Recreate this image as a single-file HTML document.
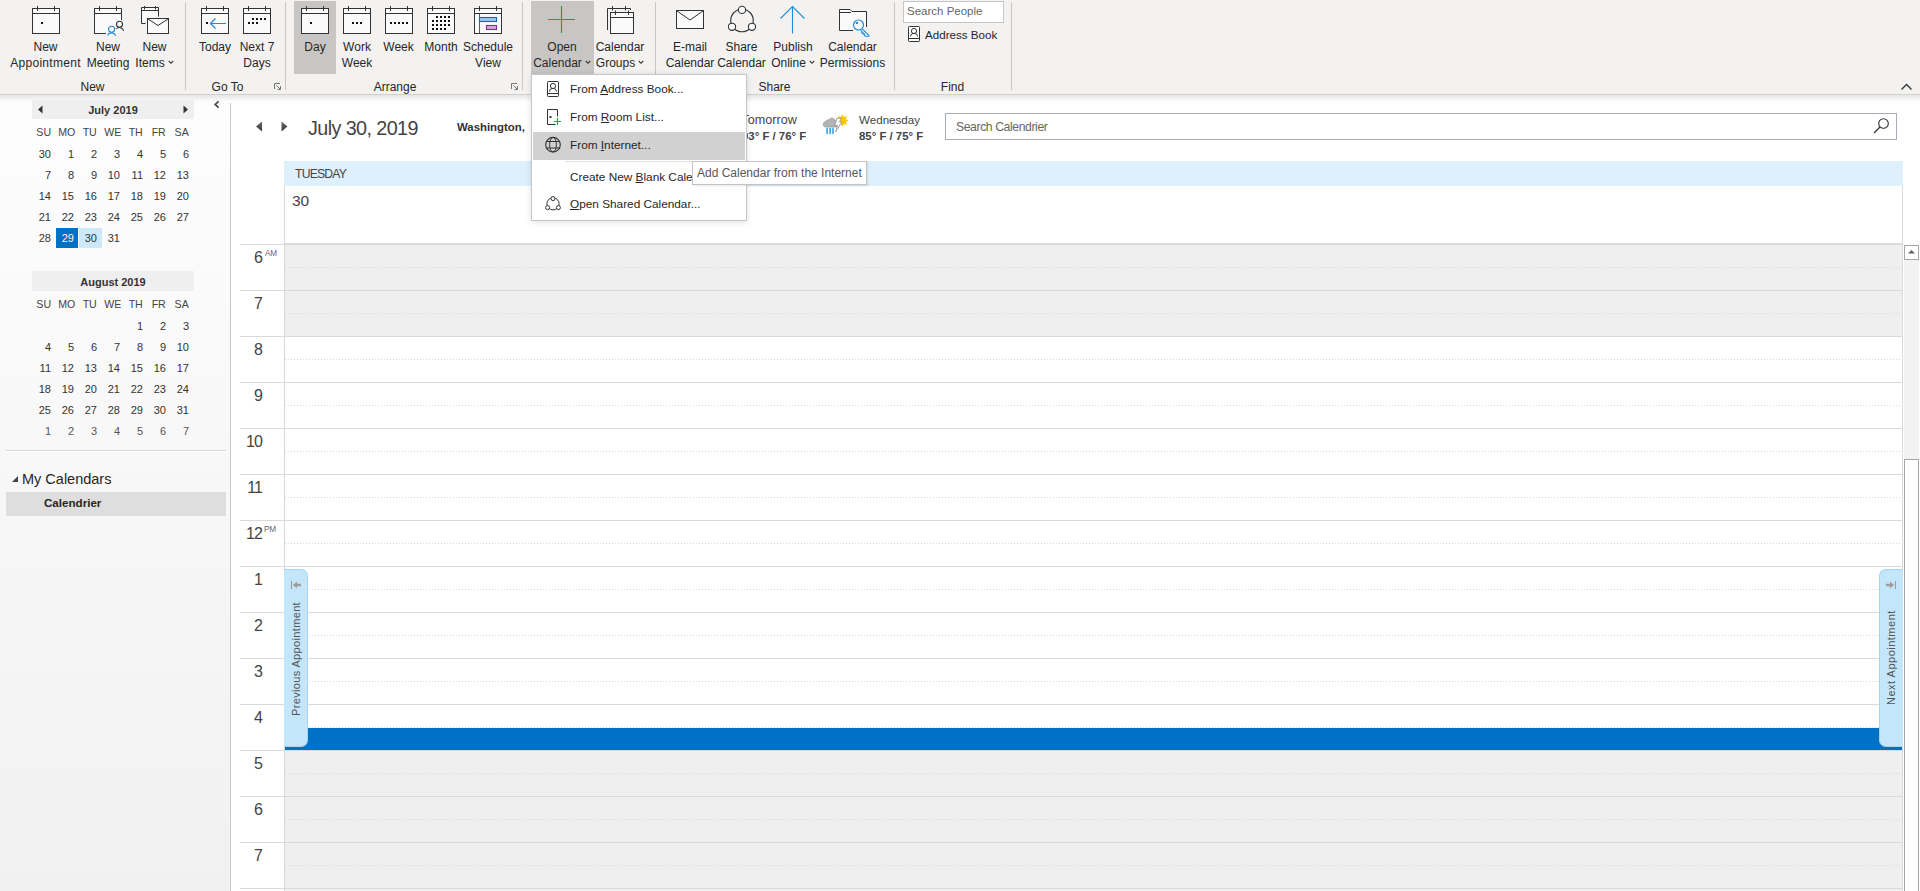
<!DOCTYPE html><html><head><meta charset="utf-8"><style>
*{box-sizing:border-box}
html,body{margin:0;padding:0;width:1920px;height:891px;overflow:hidden;background:#fff;font-family:"Liberation Sans", sans-serif;color:#262626}
.a{position:absolute}
.t{position:absolute;white-space:nowrap;line-height:1}
.rb{font-size:12px;color:#262626}
.sep{position:absolute;width:1px;background:#c8c6c4}
</style></head><body>

<div class="a" style="left:0;top:0;width:1920px;height:94px;background:#f3f2f1"></div>
<div class="a" style="left:0;top:94px;width:1920px;height:1px;background:#d2d0ce"></div>
<div class="a" style="left:0;top:95px;width:1920px;height:7px;background:linear-gradient(#e6e6e6,rgba(255,255,255,0))"></div>
<div class="a" style="left:294px;top:1px;width:42px;height:73px;background:#c8c6c4"></div>
<div class="a" style="left:531px;top:1px;width:63px;height:73px;background:#c8c6c4"></div>
<div class="sep" style="left:185px;top:2px;height:88px"></div>
<div class="sep" style="left:285px;top:2px;height:88px"></div>
<div class="sep" style="left:522px;top:2px;height:88px"></div>
<div class="sep" style="left:655px;top:2px;height:88px"></div>
<div class="sep" style="left:894px;top:2px;height:88px"></div>
<div class="sep" style="left:1011px;top:2px;height:88px"></div>
<div class="t" style="left:-54.5px;width:200px;text-align:center;top:41px;font-size:12px;color:#262626;font-weight:400;">New</div>
<div class="t" style="left:-54.5px;width:200px;text-align:center;top:57px;font-size:12px;color:#262626;font-weight:400;"><span style="letter-spacing:0.3px">Appointment</span></div>
<div class="t" style="left:8px;width:200px;text-align:center;top:41px;font-size:12px;color:#262626;font-weight:400;">New</div>
<div class="t" style="left:8px;width:200px;text-align:center;top:57px;font-size:12px;color:#262626;font-weight:400;">Meeting</div>
<div class="t" style="left:54.5px;width:200px;text-align:center;top:41px;font-size:12px;color:#262626;font-weight:400;">New</div>
<div class="t" style="left:54.5px;width:200px;text-align:center;top:57px;font-size:12px;color:#262626;font-weight:400;">Items<svg width="6" height="5" style="margin-left:3px;vertical-align:2px" viewBox="0 0 6 5"><path d="M0.8 1 L3 3.3 L5.2 1" fill="none" stroke="#333" stroke-width="1.1"/></svg></div>
<div class="t" style="left:115px;width:200px;text-align:center;top:41px;font-size:12px;color:#262626;font-weight:400;">Today</div>
<div class="t" style="left:157px;width:200px;text-align:center;top:41px;font-size:12px;color:#262626;font-weight:400;">Next 7</div>
<div class="t" style="left:157px;width:200px;text-align:center;top:57px;font-size:12px;color:#262626;font-weight:400;">Days</div>
<div class="t" style="left:215px;width:200px;text-align:center;top:41px;font-size:12px;color:#262626;font-weight:400;">Day</div>
<div class="t" style="left:257px;width:200px;text-align:center;top:41px;font-size:12px;color:#262626;font-weight:400;">Work</div>
<div class="t" style="left:257px;width:200px;text-align:center;top:57px;font-size:12px;color:#262626;font-weight:400;">Week</div>
<div class="t" style="left:298.5px;width:200px;text-align:center;top:41px;font-size:12px;color:#262626;font-weight:400;">Week</div>
<div class="t" style="left:341px;width:200px;text-align:center;top:41px;font-size:12px;color:#262626;font-weight:400;">Month</div>
<div class="t" style="left:388px;width:200px;text-align:center;top:41px;font-size:12px;color:#262626;font-weight:400;">Schedule</div>
<div class="t" style="left:388px;width:200px;text-align:center;top:57px;font-size:12px;color:#262626;font-weight:400;">View</div>
<div class="t" style="left:462px;width:200px;text-align:center;top:41px;font-size:12px;color:#262626;font-weight:400;">Open</div>
<div class="t" style="left:462px;width:200px;text-align:center;top:57px;font-size:12px;color:#262626;font-weight:400;">Calendar<svg width="6" height="5" style="margin-left:3px;vertical-align:2px" viewBox="0 0 6 5"><path d="M0.8 1 L3 3.3 L5.2 1" fill="none" stroke="#333" stroke-width="1.1"/></svg></div>
<div class="t" style="left:520px;width:200px;text-align:center;top:41px;font-size:12px;color:#262626;font-weight:400;">Calendar</div>
<div class="t" style="left:520px;width:200px;text-align:center;top:57px;font-size:12px;color:#262626;font-weight:400;">Groups<svg width="6" height="5" style="margin-left:3px;vertical-align:2px" viewBox="0 0 6 5"><path d="M0.8 1 L3 3.3 L5.2 1" fill="none" stroke="#333" stroke-width="1.1"/></svg></div>
<div class="t" style="left:590px;width:200px;text-align:center;top:41px;font-size:12px;color:#262626;font-weight:400;">E-mail</div>
<div class="t" style="left:590px;width:200px;text-align:center;top:57px;font-size:12px;color:#262626;font-weight:400;">Calendar</div>
<div class="t" style="left:641.5px;width:200px;text-align:center;top:41px;font-size:12px;color:#262626;font-weight:400;">Share</div>
<div class="t" style="left:641.5px;width:200px;text-align:center;top:57px;font-size:12px;color:#262626;font-weight:400;">Calendar</div>
<div class="t" style="left:693px;width:200px;text-align:center;top:41px;font-size:12px;color:#262626;font-weight:400;">Publish</div>
<div class="t" style="left:693px;width:200px;text-align:center;top:57px;font-size:12px;color:#262626;font-weight:400;">Online<svg width="6" height="5" style="margin-left:3px;vertical-align:2px" viewBox="0 0 6 5"><path d="M0.8 1 L3 3.3 L5.2 1" fill="none" stroke="#333" stroke-width="1.1"/></svg></div>
<div class="t" style="left:752.5px;width:200px;text-align:center;top:41px;font-size:12px;color:#262626;font-weight:400;">Calendar</div>
<div class="t" style="left:752.5px;width:200px;text-align:center;top:57px;font-size:12px;color:#262626;font-weight:400;">Permissions</div>
<div class="t" style="left:-7.5px;width:200px;text-align:center;top:81px;font-size:12px;color:#262626;font-weight:400;">New</div>
<div class="t" style="left:127.5px;width:200px;text-align:center;top:81px;font-size:12px;color:#262626;font-weight:400;">Go To</div>
<div class="t" style="left:295px;width:200px;text-align:center;top:81px;font-size:12px;color:#262626;font-weight:400;">Arrange</div>
<div class="t" style="left:674.5px;width:200px;text-align:center;top:81px;font-size:12px;color:#262626;font-weight:400;">Share</div>
<div class="t" style="left:852.5px;width:200px;text-align:center;top:81px;font-size:12px;color:#262626;font-weight:400;">Find</div>
<div class="a" style="left:903px;top:1px;width:101px;height:22px;background:#fff;border:1px solid #c6c6c6"></div>
<div class="t" style="left:907px;top:6px;font-size:11.5px;color:#666;font-weight:400;">Search People</div>
<div class="t" style="left:925px;top:29px;font-size:11.6px;color:#262626;font-weight:400;">Address Book</div>
<svg class="a" style="left:1900px;top:83px" width="13" height="8" viewBox="0 0 13 8"><path d="M1.5 6.5 L6.5 1.5 L11.5 6.5" fill="none" stroke="#333" stroke-width="1.3"/></svg>
<svg class="a" style="left:0;top:0" width="1920" height="100" viewBox="0 0 1920 100"><rect x="32.5" y="8.5" width="27" height="25" fill="#fafafa" stroke="#333333"/><path d="M32 13.5H60M37.5 6V11M54.5 6V11" stroke="#333333" fill="none"/><rect x="41" y="22" width="2" height="2" fill="#111"/><path d="M94.5 31V8.5H121.5V20M94.5 8.5V33.5H106" fill="#fafafa" stroke="#333333"/><rect x="95" y="14" width="26" height="19" fill="#fafafa"/><path d="M94 13.5H122M99.5 6V11M116.5 6V11M94.5 8.5V33.5H106" stroke="#333333" fill="none"/><path d="M121.5 9V20" stroke="#333333"/><circle cx="111.6" cy="29.3" r="3" fill="none" stroke="#1e8bd6" stroke-width="1.1"/><path d="M107.6 35.6A4.3 4.3 0 0 1 115.6 35.6" fill="none" stroke="#1e8bd6" stroke-width="1.1"/><circle cx="119.5" cy="24.3" r="3" fill="none" stroke="#333333" stroke-width="1.1"/><path d="M116.3 28.9A4.3 4.3 0 0 1 123.6 31" fill="none" stroke="#333333" stroke-width="1.1"/><path d="M141.5 23.5V7.5H158.5V16.5M141.5 23.5H145.5" fill="#fafafa" stroke="#333333"/><path d="M141 10.5H159M144.5 6V9.5M155.5 6V9.5" stroke="#333333"/><rect x="147.5" y="18.5" width="21" height="15" fill="#fafafa" stroke="#333333"/><path d="M148 19L158 25.5L168 19" fill="none" stroke="#333333"/><rect x="201.5" y="8.5" width="27" height="25" fill="#fafafa" stroke="#333333"/><path d="M201 13.5H229M206.5 6V11M223.5 6V11" stroke="#333333" fill="none"/><rect x="206" y="22" width="2" height="2" fill="#111"/><path d="M210.5 23.5H226M215.5 18.5L210.5 23.5L215.5 28.5" fill="none" stroke="#1e8bd6" stroke-width="1.2"/><rect x="243.5" y="8.5" width="27" height="25" fill="#fafafa" stroke="#333333"/><path d="M243 13.5H271M248.5 6V11M265.5 6V11" stroke="#333333" fill="none"/><rect x="252" y="18" width="2" height="2" fill="#111"/><rect x="256" y="18" width="2" height="2" fill="#111"/><rect x="260" y="18" width="2" height="2" fill="#111"/><rect x="264" y="18" width="2" height="2" fill="#111"/><rect x="248" y="22" width="2" height="2" fill="#111"/><rect x="252" y="22" width="2" height="2" fill="#111"/><rect x="256" y="22" width="2" height="2" fill="#111"/><rect x="301.5" y="8.5" width="27" height="25" fill="#fafafa" stroke="#333333"/><path d="M301 13.5H329M306.5 6V11M323.5 6V11" stroke="#333333" fill="none"/><rect x="310" y="22" width="2" height="2" fill="#111"/><rect x="343.5" y="8.5" width="27" height="25" fill="#fafafa" stroke="#333333"/><path d="M343 13.5H371M348.5 6V11M365.5 6V11" stroke="#333333" fill="none"/><rect x="352" y="22" width="2" height="2" fill="#111"/><rect x="356" y="22" width="2" height="2" fill="#111"/><rect x="360" y="22" width="2" height="2" fill="#111"/><rect x="385.5" y="8.5" width="27" height="25" fill="#fafafa" stroke="#333333"/><path d="M385 13.5H413M390.5 6V11M407.5 6V11" stroke="#333333" fill="none"/><rect x="390" y="22" width="2" height="2" fill="#111"/><rect x="394" y="22" width="2" height="2" fill="#111"/><rect x="398" y="22" width="2" height="2" fill="#111"/><rect x="402" y="22" width="2" height="2" fill="#111"/><rect x="406" y="22" width="2" height="2" fill="#111"/><rect x="427.5" y="8.5" width="27" height="25" fill="#fafafa" stroke="#333333"/><path d="M427 13.5H455M432.5 6V11M449.5 6V11" stroke="#333333" fill="none"/><rect x="436" y="16" width="2" height="2" fill="#111"/><rect x="440" y="16" width="2" height="2" fill="#111"/><rect x="444" y="16" width="2" height="2" fill="#111"/><rect x="448" y="16" width="2" height="2" fill="#111"/><rect x="432" y="20" width="2" height="2" fill="#111"/><rect x="436" y="20" width="2" height="2" fill="#111"/><rect x="440" y="20" width="2" height="2" fill="#111"/><rect x="444" y="20" width="2" height="2" fill="#111"/><rect x="448" y="20" width="2" height="2" fill="#111"/><rect x="432" y="24" width="2" height="2" fill="#111"/><rect x="436" y="24" width="2" height="2" fill="#111"/><rect x="440" y="24" width="2" height="2" fill="#111"/><rect x="444" y="24" width="2" height="2" fill="#111"/><rect x="448" y="24" width="2" height="2" fill="#111"/><rect x="432" y="28" width="2" height="2" fill="#111"/><rect x="436" y="28" width="2" height="2" fill="#111"/><rect x="440" y="28" width="2" height="2" fill="#111"/><rect x="444" y="28" width="2" height="2" fill="#111"/><rect x="474.5" y="8.5" width="27" height="25" fill="#fafafa" stroke="#333333"/><path d="M474 13.5H502M479.5 6V11M496.5 6V11" stroke="#333333" fill="none"/><path d="M479.5 14V33" stroke="#333333" stroke-width="0.8"/><rect x="479.5" y="17.5" width="17" height="4" fill="#90c8f6" stroke="#0f6cbd" stroke-width="1.1"/><rect x="486.5" y="25.5" width="10" height="4" fill="#dca0e6" stroke="#8b2aa0" stroke-width="1.1"/><path d="M561.5 6V33M548 19.5H575" stroke="#13a544" stroke-width="1.1"/><path d="M607.5 30V8.5H630.5V10" fill="none" stroke="#333333"/><path d="M612.5 6V10.5M625.5 6V10.5" stroke="#333333"/><rect x="610.5" y="12.5" width="23" height="21" fill="#fafafa" stroke="#333333"/><path d="M610 17.5H634M615.5 10.5V15M628.5 10.5V15" stroke="#333333"/><rect x="676.5" y="10.5" width="27" height="18" fill="#fafafa" stroke="#333333"/><path d="M677 11L690 20L703 11" fill="none" stroke="#333333"/><circle cx="742" cy="20.5" r="11.3" fill="none" stroke="#333333" stroke-width="1.1"/><circle cx="742" cy="9.9" r="3.6" fill="#f8f8f8" stroke="#333333" stroke-width="1.1"/><circle cx="732" cy="26.8" r="3.6" fill="#f8f8f8" stroke="#333333" stroke-width="1.1"/><circle cx="752" cy="26.8" r="3.6" fill="#f8f8f8" stroke="#333333" stroke-width="1.1"/><path d="M792.5 7V33.5M780.5 18.5L792.5 6.5L804.5 18.5" fill="none" stroke="#1e8bd6" stroke-width="1.1"/><path d="M853 30.5H839.5V9.5H850L852 11.5H866.5V27" fill="#fafafa" stroke="#333333"/><path d="M839.5 12.5H851" stroke="#333333"/><circle cx="858.5" cy="25" r="5" fill="#fafafa" stroke="#1e8bd6" stroke-width="1.2"/><rect x="856" y="22" width="2" height="2" fill="#1e8bd6"/><path d="M862.3 28.8L868.8 35.3V36.2H865.3L864 34.9L864.7 34.2L863.5 33L862.8 33.7L861.6 32.5L862.3 31.8L860.9 30.4" fill="#fafafa" stroke="#1e8bd6" stroke-width="1.1" stroke-linejoin="miter"/><rect x="908.5" y="26.5" width="11" height="15" rx="0.8" fill="#fff" stroke="#333333"/><path d="M908 38.5H920" stroke="#333333"/><circle cx="914" cy="31" r="2.6" fill="none" stroke="#333333"/><path d="M910.5 36.5A3.5 3.2 0 0 1 917.5 36.5" fill="none" stroke="#333333"/><path d="M274.5 89V83.5H280M276.5 85.5L280 89M277.5 89.5H280.5V86" fill="none" stroke="#666" stroke-width="0.9"/><path d="M511.5 89V83.5H517M513.5 85.5L517 89M514.5 89.5H517.5V86" fill="none" stroke="#666" stroke-width="0.9"/></svg>
<div class="a" style="left:0;top:102px;width:230px;height:789px;background:linear-gradient(#fdfdfd,#f1f1f1)"></div>
<div class="a" style="left:0;top:95px;width:230px;height:7px;background:linear-gradient(#e6e6e6,#fdfdfd)"></div>
<div class="a" style="left:230px;top:103px;width:1px;height:788px;background:#c8c8c8"></div>
<div class="a" style="left:32px;top:100px;width:162px;height:19px;background:#efefef"></div>
<div class="a" style="left:32px;top:271px;width:162px;height:20px;background:#efefef"></div>
<svg class="a" style="left:0;top:95px" width="230" height="30" viewBox="0 95 230 30"><path d="M38 109.5L42.5 105.5V113.5Z" fill="#333"/><path d="M188 109.5L183.5 105.5V113.5Z" fill="#333"/><path d="M218.6 101.3L215.2 104.5L218.6 107.7" fill="none" stroke="#444" stroke-width="1.7"/></svg>
<div class="t" style="left:13px;width:200px;text-align:center;top:105px;font-size:11px;color:#333;font-weight:700;">July 2019</div>
<div class="t" style="left:13px;width:200px;text-align:center;top:277px;font-size:11px;color:#333;font-weight:700;">August 2019</div>
<div class="a" style="left:56px;top:228px;width:22px;height:20px;background:#0072c6"></div>
<div class="a" style="left:79px;top:228px;width:23px;height:20px;background:#cce8f9"></div>
<div class="t" style="left:-56.3px;width:200px;text-align:center;top:127px;font-size:10.6px;color:#444;font-weight:400;">SU</div>
<div class="t" style="left:-33.3px;width:200px;text-align:center;top:127px;font-size:10.6px;color:#444;font-weight:400;">MO</div>
<div class="t" style="left:-10.299999999999997px;width:200px;text-align:center;top:127px;font-size:10.6px;color:#444;font-weight:400;">TU</div>
<div class="t" style="left:12.700000000000003px;width:200px;text-align:center;top:127px;font-size:10.6px;color:#444;font-weight:400;">WE</div>
<div class="t" style="left:35.69999999999999px;width:200px;text-align:center;top:127px;font-size:10.6px;color:#444;font-weight:400;">TH</div>
<div class="t" style="left:58.69999999999999px;width:200px;text-align:center;top:127px;font-size:10.6px;color:#444;font-weight:400;">FR</div>
<div class="t" style="left:81.69999999999999px;width:200px;text-align:center;top:127px;font-size:10.6px;color:#444;font-weight:400;">SA</div>
<div class="t" style="left:20px;width:31px;text-align:right;top:149px;font-size:11px;color:#333">30</div>
<div class="t" style="left:43px;width:31px;text-align:right;top:149px;font-size:11px;color:#333">1</div>
<div class="t" style="left:66px;width:31px;text-align:right;top:149px;font-size:11px;color:#333">2</div>
<div class="t" style="left:89px;width:31px;text-align:right;top:149px;font-size:11px;color:#333">3</div>
<div class="t" style="left:112px;width:31px;text-align:right;top:149px;font-size:11px;color:#333">4</div>
<div class="t" style="left:135px;width:31px;text-align:right;top:149px;font-size:11px;color:#333">5</div>
<div class="t" style="left:158px;width:31px;text-align:right;top:149px;font-size:11px;color:#333">6</div>
<div class="t" style="left:20px;width:31px;text-align:right;top:170px;font-size:11px;color:#333">7</div>
<div class="t" style="left:43px;width:31px;text-align:right;top:170px;font-size:11px;color:#333">8</div>
<div class="t" style="left:66px;width:31px;text-align:right;top:170px;font-size:11px;color:#333">9</div>
<div class="t" style="left:89px;width:31px;text-align:right;top:170px;font-size:11px;color:#333">10</div>
<div class="t" style="left:112px;width:31px;text-align:right;top:170px;font-size:11px;color:#333">11</div>
<div class="t" style="left:135px;width:31px;text-align:right;top:170px;font-size:11px;color:#333">12</div>
<div class="t" style="left:158px;width:31px;text-align:right;top:170px;font-size:11px;color:#333">13</div>
<div class="t" style="left:20px;width:31px;text-align:right;top:191px;font-size:11px;color:#333">14</div>
<div class="t" style="left:43px;width:31px;text-align:right;top:191px;font-size:11px;color:#333">15</div>
<div class="t" style="left:66px;width:31px;text-align:right;top:191px;font-size:11px;color:#333">16</div>
<div class="t" style="left:89px;width:31px;text-align:right;top:191px;font-size:11px;color:#333">17</div>
<div class="t" style="left:112px;width:31px;text-align:right;top:191px;font-size:11px;color:#333">18</div>
<div class="t" style="left:135px;width:31px;text-align:right;top:191px;font-size:11px;color:#333">19</div>
<div class="t" style="left:158px;width:31px;text-align:right;top:191px;font-size:11px;color:#333">20</div>
<div class="t" style="left:20px;width:31px;text-align:right;top:212px;font-size:11px;color:#333">21</div>
<div class="t" style="left:43px;width:31px;text-align:right;top:212px;font-size:11px;color:#333">22</div>
<div class="t" style="left:66px;width:31px;text-align:right;top:212px;font-size:11px;color:#333">23</div>
<div class="t" style="left:89px;width:31px;text-align:right;top:212px;font-size:11px;color:#333">24</div>
<div class="t" style="left:112px;width:31px;text-align:right;top:212px;font-size:11px;color:#333">25</div>
<div class="t" style="left:135px;width:31px;text-align:right;top:212px;font-size:11px;color:#333">26</div>
<div class="t" style="left:158px;width:31px;text-align:right;top:212px;font-size:11px;color:#333">27</div>
<div class="t" style="left:20px;width:31px;text-align:right;top:233px;font-size:11px;color:#333">28</div>
<div class="t" style="left:43px;width:31px;text-align:right;top:233px;font-size:11px;color:#333">29</div>
<div class="t" style="left:66px;width:31px;text-align:right;top:233px;font-size:11px;color:#333">30</div>
<div class="t" style="left:89px;width:31px;text-align:right;top:233px;font-size:11px;color:#333">31</div>
<div class="t" style="left:43px;width:31px;text-align:right;top:233px;font-size:11px;color:#fff">29</div>
<div class="t" style="left:-56.3px;width:200px;text-align:center;top:299px;font-size:10.6px;color:#444;font-weight:400;">SU</div>
<div class="t" style="left:-33.3px;width:200px;text-align:center;top:299px;font-size:10.6px;color:#444;font-weight:400;">MO</div>
<div class="t" style="left:-10.299999999999997px;width:200px;text-align:center;top:299px;font-size:10.6px;color:#444;font-weight:400;">TU</div>
<div class="t" style="left:12.700000000000003px;width:200px;text-align:center;top:299px;font-size:10.6px;color:#444;font-weight:400;">WE</div>
<div class="t" style="left:35.69999999999999px;width:200px;text-align:center;top:299px;font-size:10.6px;color:#444;font-weight:400;">TH</div>
<div class="t" style="left:58.69999999999999px;width:200px;text-align:center;top:299px;font-size:10.6px;color:#444;font-weight:400;">FR</div>
<div class="t" style="left:81.69999999999999px;width:200px;text-align:center;top:299px;font-size:10.6px;color:#444;font-weight:400;">SA</div>
<div class="t" style="left:112px;width:31px;text-align:right;top:321px;font-size:11px;color:#333">1</div>
<div class="t" style="left:135px;width:31px;text-align:right;top:321px;font-size:11px;color:#333">2</div>
<div class="t" style="left:158px;width:31px;text-align:right;top:321px;font-size:11px;color:#333">3</div>
<div class="t" style="left:20px;width:31px;text-align:right;top:342px;font-size:11px;color:#333">4</div>
<div class="t" style="left:43px;width:31px;text-align:right;top:342px;font-size:11px;color:#333">5</div>
<div class="t" style="left:66px;width:31px;text-align:right;top:342px;font-size:11px;color:#333">6</div>
<div class="t" style="left:89px;width:31px;text-align:right;top:342px;font-size:11px;color:#333">7</div>
<div class="t" style="left:112px;width:31px;text-align:right;top:342px;font-size:11px;color:#333">8</div>
<div class="t" style="left:135px;width:31px;text-align:right;top:342px;font-size:11px;color:#333">9</div>
<div class="t" style="left:158px;width:31px;text-align:right;top:342px;font-size:11px;color:#333">10</div>
<div class="t" style="left:20px;width:31px;text-align:right;top:363px;font-size:11px;color:#333">11</div>
<div class="t" style="left:43px;width:31px;text-align:right;top:363px;font-size:11px;color:#333">12</div>
<div class="t" style="left:66px;width:31px;text-align:right;top:363px;font-size:11px;color:#333">13</div>
<div class="t" style="left:89px;width:31px;text-align:right;top:363px;font-size:11px;color:#333">14</div>
<div class="t" style="left:112px;width:31px;text-align:right;top:363px;font-size:11px;color:#333">15</div>
<div class="t" style="left:135px;width:31px;text-align:right;top:363px;font-size:11px;color:#333">16</div>
<div class="t" style="left:158px;width:31px;text-align:right;top:363px;font-size:11px;color:#333">17</div>
<div class="t" style="left:20px;width:31px;text-align:right;top:384px;font-size:11px;color:#333">18</div>
<div class="t" style="left:43px;width:31px;text-align:right;top:384px;font-size:11px;color:#333">19</div>
<div class="t" style="left:66px;width:31px;text-align:right;top:384px;font-size:11px;color:#333">20</div>
<div class="t" style="left:89px;width:31px;text-align:right;top:384px;font-size:11px;color:#333">21</div>
<div class="t" style="left:112px;width:31px;text-align:right;top:384px;font-size:11px;color:#333">22</div>
<div class="t" style="left:135px;width:31px;text-align:right;top:384px;font-size:11px;color:#333">23</div>
<div class="t" style="left:158px;width:31px;text-align:right;top:384px;font-size:11px;color:#333">24</div>
<div class="t" style="left:20px;width:31px;text-align:right;top:405px;font-size:11px;color:#333">25</div>
<div class="t" style="left:43px;width:31px;text-align:right;top:405px;font-size:11px;color:#333">26</div>
<div class="t" style="left:66px;width:31px;text-align:right;top:405px;font-size:11px;color:#333">27</div>
<div class="t" style="left:89px;width:31px;text-align:right;top:405px;font-size:11px;color:#333">28</div>
<div class="t" style="left:112px;width:31px;text-align:right;top:405px;font-size:11px;color:#333">29</div>
<div class="t" style="left:135px;width:31px;text-align:right;top:405px;font-size:11px;color:#333">30</div>
<div class="t" style="left:158px;width:31px;text-align:right;top:405px;font-size:11px;color:#333">31</div>
<div class="t" style="left:20px;width:31px;text-align:right;top:426px;font-size:11px;color:#555">1</div>
<div class="t" style="left:43px;width:31px;text-align:right;top:426px;font-size:11px;color:#555">2</div>
<div class="t" style="left:66px;width:31px;text-align:right;top:426px;font-size:11px;color:#555">3</div>
<div class="t" style="left:89px;width:31px;text-align:right;top:426px;font-size:11px;color:#555">4</div>
<div class="t" style="left:112px;width:31px;text-align:right;top:426px;font-size:11px;color:#555">5</div>
<div class="t" style="left:135px;width:31px;text-align:right;top:426px;font-size:11px;color:#555">6</div>
<div class="t" style="left:158px;width:31px;text-align:right;top:426px;font-size:11px;color:#555">7</div>
<div class="a" style="left:6px;top:450px;width:220px;height:1px;background:#d8d8d8"></div>
<div class="a" style="left:6px;top:451px;width:220px;height:1px;background:#fff"></div>
<svg class="a" style="left:11px;top:475px" width="8" height="8" viewBox="0 0 8 8"><path d="M1 7H7V1Z" fill="#444"/></svg>
<div class="t" style="left:22px;top:472px;font-size:14.5px;color:#262626;font-weight:400;">My Calendars</div>
<div class="a" style="left:6px;top:492px;width:220px;height:24px;background:#dedede"></div>
<div class="t" style="left:44px;top:497px;font-size:11.6px;color:#262626;font-weight:700;">Calendrier</div>
<div class="a" style="left:231px;top:102px;width:1689px;height:789px;background:#fff"></div>
<div class="a" style="left:231px;top:95px;width:1689px;height:7px;background:linear-gradient(#e6e6e6,#fff)"></div>
<svg class="a" style="left:250px;top:118px" width="44" height="16" viewBox="250 118 44 16"><defs><linearGradient id="ga" x1="0" y1="0" x2="0" y2="1"><stop offset="0" stop-color="#6a6a6a"/><stop offset="1" stop-color="#3a3a3a"/></linearGradient></defs><path d="M256 126.5L262 121.5V131.5Z" fill="url(#ga)"/><path d="M287.5 126.5L281.5 121.5V131.5Z" fill="url(#ga)"/></svg>
<div class="t" style="left:308px;top:119px;font-size:19.8px;color:#444;font-weight:400;letter-spacing:-0.6px">July 30, 2019</div>
<div class="t" style="left:457px;top:122px;font-size:11.4px;color:#333;font-weight:700;">Washington,</div>
<div class="t" style="left:741.5px;top:114px;font-size:12.6px;color:#444;font-weight:400;">Tomorrow</div>
<div class="t" style="left:742px;top:131px;font-size:11.4px;color:#444;font-weight:700;">93° F / 76° F</div>
<div class="t" style="left:859px;top:114px;font-size:11.6px;color:#444;font-weight:400;">Wednesday</div>
<div class="t" style="left:859px;top:131px;font-size:11.4px;color:#444;font-weight:700;">85° F / 75° F</div>
<svg class="a" style="left:818px;top:108px" width="34" height="30" viewBox="818 108 34 30"><polygon points="842.30,114.20 843.79,116.90 846.75,116.05 845.90,119.01 848.60,120.50 845.90,121.99 846.75,124.95 843.79,124.10 842.30,126.80 840.81,124.10 837.85,124.95 838.70,121.99 836.00,120.50 838.70,119.01 837.85,116.05 840.81,116.90" fill="#fcc800"/><path d="M825.5 127C822.5 127 822.3 121.8 825.8 121.6C826.5 119.8 828.3 119.6 829 120C830 117.4 834 117.2 835 120.3C837.2 120 838.6 122 838.2 124C839.6 124.2 839.6 127 838 127Z" fill="#b3b3b3" stroke="#9a9a9a" stroke-width="0.7"/><path d="M836.8 118.3H841.3L839.5 121.8H842L835.7 131.8L837.5 125.5H834.8Z" fill="#fff" stroke="#8e8e8e" stroke-width="0.8"/><path d="M827.1 128.3V133.4M830.1 128.3V133.4M833 128.3V133.4" stroke="#3aa0e6" stroke-width="1.6" stroke-linecap="round"/></svg>
<div class="a" style="left:945px;top:113px;width:952px;height:27px;border:1px solid #a3acb8;background:#fff"></div>
<div class="t" style="left:956px;top:121px;font-size:12.2px;color:#666;font-weight:400;letter-spacing:-0.4px">Search Calendrier</div>
<svg class="a" style="left:1870px;top:115px" width="24" height="22" viewBox="1870 115 24 22"><circle cx="1883.5" cy="123.5" r="4.8" fill="none" stroke="#333" stroke-width="1.1"/><path d="M1880 127L1874 133" stroke="#333" stroke-width="1.2"/></svg>
<div class="a" style="left:284px;top:161px;width:1619px;height:25px;background:#ddf0fb"></div>
<div class="t" style="left:295px;top:168px;font-size:12.2px;color:#444;font-weight:400;letter-spacing:-0.8px">TUESDAY</div>
<div class="t" style="left:292px;top:193px;font-size:15.5px;color:#444;font-weight:400;">30</div>
<div class="a" style="left:284px;top:186px;width:1px;height:705px;background:#d8d8d8"></div>
<div class="a" style="left:1902px;top:186px;width:1px;height:705px;background:#dadada"></div>
<div class="a" style="left:285px;top:245px;width:1617px;height:91px;background:#efefef"></div>
<div class="a" style="left:285px;top:750px;width:1617px;height:141px;background:#efefef"></div>
<div class="a" style="left:285px;top:243px;width:1617px;height:2px;background:#dadada"></div>
<div class="a" style="left:240px;top:244px;width:44px;height:1px;background:#dadada"></div>
<div class="a" style="left:285px;top:267px;width:1617px;height:1px;background-image:linear-gradient(90deg,#d8d8d8 1px,transparent 1px);background-size:3px 1px"></div>
<div class="t" style="left:212px;width:50px;text-align:right;top:250px;font-size:16px;color:#444;letter-spacing:-0.9px">6</div>
<div class="a" style="left:240px;top:290px;width:1662px;height:1px;background:#dadada"></div>
<div class="a" style="left:285px;top:313px;width:1617px;height:1px;background-image:linear-gradient(90deg,#d8d8d8 1px,transparent 1px);background-size:3px 1px"></div>
<div class="t" style="left:212px;width:50px;text-align:right;top:296px;font-size:16px;color:#444;letter-spacing:-0.9px">7</div>
<div class="a" style="left:240px;top:336px;width:1662px;height:1px;background:#dadada"></div>
<div class="a" style="left:285px;top:359px;width:1617px;height:1px;background-image:linear-gradient(90deg,#d8d8d8 1px,transparent 1px);background-size:3px 1px"></div>
<div class="t" style="left:212px;width:50px;text-align:right;top:342px;font-size:16px;color:#444;letter-spacing:-0.9px">8</div>
<div class="a" style="left:240px;top:382px;width:1662px;height:1px;background:#dadada"></div>
<div class="a" style="left:285px;top:405px;width:1617px;height:1px;background-image:linear-gradient(90deg,#d8d8d8 1px,transparent 1px);background-size:3px 1px"></div>
<div class="t" style="left:212px;width:50px;text-align:right;top:388px;font-size:16px;color:#444;letter-spacing:-0.9px">9</div>
<div class="a" style="left:240px;top:428px;width:1662px;height:1px;background:#dadada"></div>
<div class="a" style="left:285px;top:451px;width:1617px;height:1px;background-image:linear-gradient(90deg,#d8d8d8 1px,transparent 1px);background-size:3px 1px"></div>
<div class="t" style="left:212px;width:50px;text-align:right;top:434px;font-size:16px;color:#444;letter-spacing:-0.9px">10</div>
<div class="a" style="left:240px;top:474px;width:1662px;height:1px;background:#dadada"></div>
<div class="a" style="left:285px;top:497px;width:1617px;height:1px;background-image:linear-gradient(90deg,#d8d8d8 1px,transparent 1px);background-size:3px 1px"></div>
<div class="t" style="left:212px;width:50px;text-align:right;top:480px;font-size:16px;color:#444;letter-spacing:-0.9px">11</div>
<div class="a" style="left:240px;top:520px;width:1662px;height:1px;background:#dadada"></div>
<div class="a" style="left:285px;top:543px;width:1617px;height:1px;background-image:linear-gradient(90deg,#d8d8d8 1px,transparent 1px);background-size:3px 1px"></div>
<div class="t" style="left:212px;width:50px;text-align:right;top:526px;font-size:16px;color:#444;letter-spacing:-0.9px">12</div>
<div class="a" style="left:240px;top:566px;width:1662px;height:1px;background:#dadada"></div>
<div class="a" style="left:285px;top:589px;width:1617px;height:1px;background-image:linear-gradient(90deg,#d8d8d8 1px,transparent 1px);background-size:3px 1px"></div>
<div class="t" style="left:212px;width:50px;text-align:right;top:572px;font-size:16px;color:#444;letter-spacing:-0.9px">1</div>
<div class="a" style="left:240px;top:612px;width:1662px;height:1px;background:#dadada"></div>
<div class="a" style="left:285px;top:635px;width:1617px;height:1px;background-image:linear-gradient(90deg,#d8d8d8 1px,transparent 1px);background-size:3px 1px"></div>
<div class="t" style="left:212px;width:50px;text-align:right;top:618px;font-size:16px;color:#444;letter-spacing:-0.9px">2</div>
<div class="a" style="left:240px;top:658px;width:1662px;height:1px;background:#dadada"></div>
<div class="a" style="left:285px;top:681px;width:1617px;height:1px;background-image:linear-gradient(90deg,#d8d8d8 1px,transparent 1px);background-size:3px 1px"></div>
<div class="t" style="left:212px;width:50px;text-align:right;top:664px;font-size:16px;color:#444;letter-spacing:-0.9px">3</div>
<div class="a" style="left:240px;top:704px;width:1662px;height:1px;background:#dadada"></div>
<div class="a" style="left:285px;top:727px;width:1617px;height:1px;background-image:linear-gradient(90deg,#d8d8d8 1px,transparent 1px);background-size:3px 1px"></div>
<div class="t" style="left:212px;width:50px;text-align:right;top:710px;font-size:16px;color:#444;letter-spacing:-0.9px">4</div>
<div class="a" style="left:240px;top:750px;width:1662px;height:1px;background:#dadada"></div>
<div class="a" style="left:285px;top:773px;width:1617px;height:1px;background-image:linear-gradient(90deg,#d8d8d8 1px,transparent 1px);background-size:3px 1px"></div>
<div class="t" style="left:212px;width:50px;text-align:right;top:756px;font-size:16px;color:#444;letter-spacing:-0.9px">5</div>
<div class="a" style="left:240px;top:796px;width:1662px;height:1px;background:#dadada"></div>
<div class="a" style="left:285px;top:819px;width:1617px;height:1px;background-image:linear-gradient(90deg,#d8d8d8 1px,transparent 1px);background-size:3px 1px"></div>
<div class="t" style="left:212px;width:50px;text-align:right;top:802px;font-size:16px;color:#444;letter-spacing:-0.9px">6</div>
<div class="a" style="left:240px;top:842px;width:1662px;height:1px;background:#dadada"></div>
<div class="a" style="left:285px;top:865px;width:1617px;height:1px;background-image:linear-gradient(90deg,#d8d8d8 1px,transparent 1px);background-size:3px 1px"></div>
<div class="t" style="left:212px;width:50px;text-align:right;top:848px;font-size:16px;color:#444;letter-spacing:-0.9px">7</div>
<div class="a" style="left:240px;top:888px;width:1662px;height:1px;background:#dadada"></div>
<div class="a" style="left:285px;top:911px;width:1617px;height:1px;background-image:linear-gradient(90deg,#d8d8d8 1px,transparent 1px);background-size:3px 1px"></div>
<div class="t" style="left:212px;width:50px;text-align:right;top:894px;font-size:16px;color:#444;letter-spacing:-0.9px">8</div>
<div class="t" style="left:265px;top:250px;font-size:8.2px;color:#666;font-weight:400;letter-spacing:-0.2px">AM</div>
<div class="t" style="left:264px;top:525.5px;font-size:8.2px;color:#666;font-weight:400;letter-spacing:-0.2px">PM</div>
<div class="a" style="left:285px;top:728px;width:1617px;height:22px;background:#0072c6"></div>
<div class="a" style="left:284px;top:569px;width:24px;height:178px;background:#c3e6fb;border:1px solid #a4d4f6;border-left:none;border-radius:0 7px 7px 0"></div>
<div class="a" style="left:1879px;top:569px;width:24px;height:178px;background:#c3e6fb;border:1px solid #a4d4f6;border-right:none;border-radius:7px 0 0 7px"></div>
<div class="t" style="left:291px;top:715.5px;transform-origin:0 0;transform:rotate(-90deg);font-size:11px;color:#555;letter-spacing:0.35px">Previous Appointment</div>
<div class="t" style="left:1886px;top:705px;transform-origin:0 0;transform:rotate(-90deg);font-size:11px;color:#555;letter-spacing:0.5px">Next Appointment</div>
<svg class="a" style="left:288px;top:578px" width="18" height="14" viewBox="288 578 18 14"><path d="M291.5 581V589" stroke="#a09a9a" stroke-width="1.1"/><path d="M293 585L297 581.5V583.8H301V586.2H297V588.5Z" fill="#a09a9a"/></svg>
<svg class="a" style="left:1882px;top:578px" width="18" height="14" viewBox="1882 578 18 14"><path d="M1895.5 581V589" stroke="#a09a9a" stroke-width="1.1"/><path d="M1894 585L1890 581.5V583.8H1886V586.2H1890V588.5Z" fill="#a09a9a"/></svg>
<div class="a" style="left:1904px;top:245px;width:15px;height:646px;background:#f2f2f2"></div>
<div class="a" style="left:1904px;top:245px;width:15px;height:15px;background:#fff;border:1px solid #a6a6a6"></div>
<svg class="a" style="left:1904px;top:245px" width="15" height="15" viewBox="0 0 15 15"><path d="M4 8.5L7.5 5L11 8.5Z" fill="#606060"/></svg>
<div class="a" style="left:1904px;top:459px;width:15px;height:440px;background:#fff;border:1px solid #a6a6a6"></div>
<div class="a" style="left:531px;top:74px;width:216px;height:147px;background:#fff;border:1px solid #c6c6c6;box-shadow:0 1px 6px rgba(0,0,0,0.13)"></div>
<div class="a" style="left:533px;top:132px;width:212px;height:28px;background:#d1d1d1"></div>
<div class="a" style="left:565px;top:161px;width:180px;height:1px;background:#e1e1e1"></div>
<div class="t" style="left:570px;top:84px;font-size:11.8px;color:#262626">From <u style="text-underline-offset:1px">A</u>ddress Book...</div>
<div class="t" style="left:570px;top:112px;font-size:11.8px;color:#262626">From <u style="text-underline-offset:1px">R</u>oom List...</div>
<div class="t" style="left:570px;top:140px;font-size:11.8px;color:#262626">From <u style="text-underline-offset:1px">I</u>nternet...</div>
<div class="t" style="left:570px;top:172px;font-size:11.8px;color:#262626">Create New <u style="text-underline-offset:1px">B</u>lank Calendar...</div>
<div class="t" style="left:570px;top:199px;font-size:11.8px;color:#262626"><u style="text-underline-offset:1px">O</u>pen Shared Calendar...</div>
<svg class="a" style="left:530px;top:75px" width="40" height="145" viewBox="530 75 40 145"><rect x="547.5" y="81.5" width="11" height="15" rx="0.8" fill="#fff" stroke="#333333"/><path d="M547 93.5H559" stroke="#333333"/><circle cx="553" cy="86" r="2.6" fill="none" stroke="#333333"/><path d="M549.5 91.5A3.5 3.2 0 0 1 556.5 91.5" fill="none" stroke="#333333"/><path d="M555.5 124.5H547.5V109.5H557.5V116.5" fill="#fafafa" stroke="#333333"/><rect x="549.5" y="116" width="2" height="2" fill="#333333"/><path d="M557.5 118V125M554 121.5H561" stroke="#13a544" stroke-width="1.1"/><circle cx="553" cy="144.7" r="7.3" fill="none" stroke="#333333" stroke-width="1.1"/><ellipse cx="553" cy="144.7" rx="3.4" ry="7.3" fill="none" stroke="#333333" stroke-width="1"/><path d="M546 141.5H560M546 148H560" stroke="#333333" stroke-width="1"/><circle cx="553" cy="203.8" r="6.1" fill="none" stroke="#333333" stroke-width="1"/><circle cx="553" cy="198.6" r="2" fill="#fff" stroke="#333333" stroke-width="1"/><circle cx="547.6" cy="207.6" r="2" fill="#fff" stroke="#333333" stroke-width="1"/><circle cx="558.4" cy="207.6" r="2" fill="#fff" stroke="#333333" stroke-width="1"/></svg>
<div class="a" style="left:692px;top:161px;width:175px;height:24px;background:#fff;border:1px solid #c3c3c3;box-shadow:1px 1px 2px rgba(0,0,0,0.1)"></div>
<div class="t" style="left:697px;top:167px;font-size:12px;color:#575757;font-weight:400;">Add Calendar from the Internet</div>
</body></html>
